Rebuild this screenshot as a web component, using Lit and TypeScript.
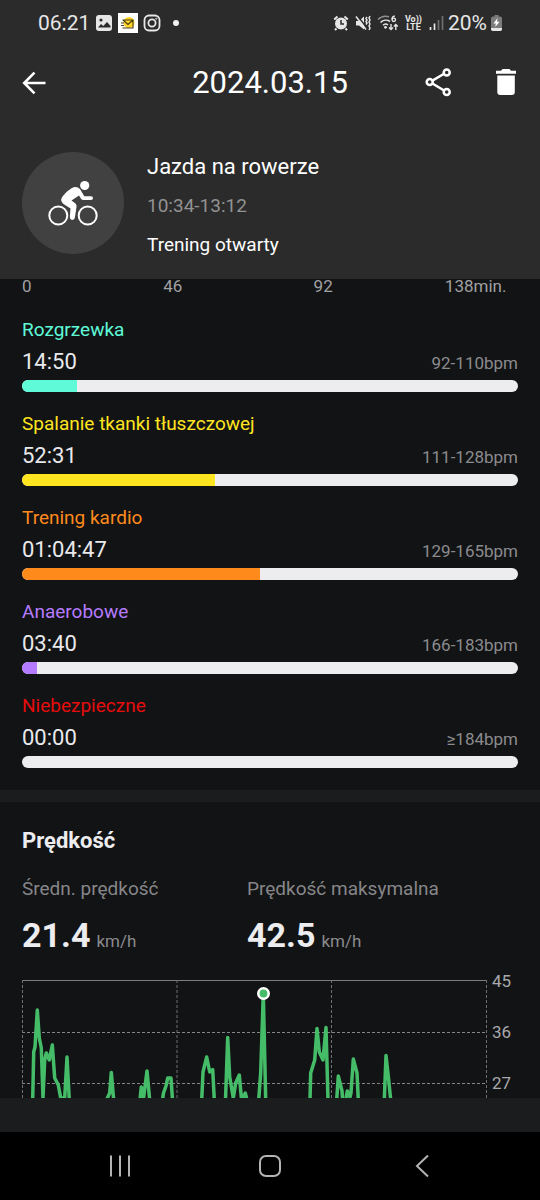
import { LitElement, html, svg, css } from "lit";
import { customElement, property } from "lit/decorators.js";

interface Zone {
  name: string;
  time: string;
  range: string;
  color: string;
  percent: number;
}

const ZONES: Zone[] = [
  { name: "Rozgrzewka", time: "14:50", range: "92-110bpm", color: "#5ffbd9", percent: 11 },
  { name: "Spalanie tkanki tłuszczowej", time: "52:31", range: "111-128bpm", color: "#ffe51f", percent: 39 },
  { name: "Trening kardio", time: "01:04:47", range: "129-165bpm", color: "#ff8a1c", percent: 48 },
  { name: "Anaerobowe", time: "03:40", range: "166-183bpm", color: "#b57bff", percent: 3 },
  { name: "Niebezpieczne", time: "00:00", range: "≥184bpm", color: "#e60c0c", percent: 0 },
];

// Speed peaks, one polyline per burst, in chart units.
const PEAKS: string[] = [
  "10.7,120 11.7,72 13,67 15.3,30 17.3,58 19.3,68 21,118 22.7,80 24.3,73 27.3,80 30.3,65 32.7,98 36.3,105 38.7,118 42.7,118 45,77 47.3,120",
  "84.5,120 87.7,113 89.3,92.5 91.7,120",
  "118,120 119.3,107 121.7,117 125,91 127.7,120",
  "140.5,120 141.5,113 144,106 145.7,98 149,98 150.5,120",
  "179.7,120 181,92 184.7,77 187.7,92 190.7,89.5 192.3,120",
  "203.5,120 205.7,57.5 207.7,97 211.3,118 213.7,103 217.3,95 219.3,117 221,118 223.3,113 225,120",
  "236.7,120 238.7,93 241.3,13.5 243.7,120",
  "288,120 288.7,93 292.7,80 295,48.5 297.3,72 301,80 304,47.5 306,120",
  "314.7,120 316.3,96 320,111 320.7,120",
  "323.7,120 325.3,111 328,117 329,113 331.3,79 335,93 336.3,120",
  "362.3,120 364,75.5 366.7,100 368.7,120",
];

@customElement("status-bar")
class StatusBar extends LitElement {
  static styles = css`
    :host { display: block; color: #e6e6e6; }
    .bar { display: flex; justify-content: space-between; align-items: center; height: 46px; padding: 0 38px; }
    .group { display: flex; align-items: center; gap: 5px; }
    .right { gap: 4px; }
    .text { font-size: 21px; line-height: 24px; }
    svg { display: block; flex: none; }
    .volte { display: grid; font-size: 9px; line-height: 8px; font-weight: 700; text-align: center; margin: 0 2px; }
  `;

  render() {
    return html`
      <div class="bar">
        <div class="group">
          <span class="text">06:21</span>
          <svg width="18" height="18" viewBox="0 0 18 18">
            <rect x="1" y="1" width="16" height="16" rx="3" fill="#e6e6e6" />
            <circle cx="6" cy="6" r="1.6" fill="#2b2b2b" />
            <path d="M3 13.5 6 10l2.3 2L12 8l3.5 4v1.500z" fill="#2b2b2b" />
          </svg>
          <svg width="20" height="20" viewBox="0 0 20 20">
            <rect width="20" height="20" fill="#fff" />
            <circle cx="11" cy="9.500" r="5.500" fill="#ffd426" />
            <path d="M4.500 7h10.500v8H4.500M5 7l5 4.500L15 7M3 10h3M3 12.500h3" fill="none" stroke="#4a4018" stroke-width="1.100" />
          </svg>
          <svg width="18" height="18" viewBox="0 0 18 18" fill="none" stroke="#e6e6e6" stroke-width="1.800">
            <rect x="1.500" y="1.500" width="15" height="15" rx="4.500" />
            <circle cx="9" cy="9" r="3.600" />
            <circle cx="13.300" cy="4.700" r="0.600" stroke-width="1" />
          </svg>
          <svg width="22" height="18" viewBox="0 0 22 18"><circle cx="10" cy="9" r="3" fill="#f0f0f0" /></svg>
        </div>
        <div class="group right">
          <svg width="16" height="18" viewBox="0 0 16 18" fill="none" stroke="#e6e6e6">
            <circle cx="8" cy="9.500" r="6" fill="#e6e6e6" stroke="none" />
            <path d="M8 6v4h3" stroke="#2b2b2b" stroke-width="1.500" />
            <path d="M1.200 5.500 4.500 2.500M14.800 5.500 11.500 2.500M3.500 14.500 2 16.200M12.500 14.500 14 16.200" stroke-width="2" />
          </svg>
          <svg width="20" height="18" viewBox="0 0 20 18" fill="none" stroke="#e6e6e6">
            <path d="M3 7h3l5-4.500v13L6 11.500H3z" fill="#e6e6e6" stroke="none" />
            <path d="M4.500 2 12 11.500" stroke="#2b2b2b" stroke-width="1.500" />
            <path d="M3 2.500 13 15.500" stroke-width="1.500" />
            <path d="M14 3l-1 1.500 1 1.500-1 1.500 1 1.500-1 1.500M17 2l-1 2 1 2-1 2 1 2-1 2 1 2-1 2" stroke-width="1.500" />
          </svg>
          <svg width="22" height="18" viewBox="0 0 22 18" fill="none" stroke="#e6e6e6" stroke-width="1.600">
            <path d="M1 5.500C4 2.500 8 1.600 12 2.800" stroke="#8f8f8f" />
            <path d="M3.500 8.500C6 6 10 5.500 13 7.500M6 11.300c1.500-1.500 3.500-1.500 5-.3" />
            <circle cx="8.500" cy="13.300" r="1.400" fill="#e6e6e6" stroke="none" />
            <path d="M17.800 2c-1.800.2-2.800 1.600-2.800 3.500" stroke-width="1.400" />
            <circle cx="16.800" cy="5.800" r="1.700" stroke-width="1.400" />
            <path d="M14 10v5.500M12 13.500l2 2 2-2M18.800 16v-5.500M16.800 12.500l2-2 2 2" stroke-width="1.400" />
          </svg>
          <span class="volte"><span>Vo))</span><span>LTE</span></span>
          <svg width="16" height="18" viewBox="0 0 16 18" stroke-width="1.700">
            <path d="M2.500 13v3M6.500 9.500V16" stroke="#e6e6e6" />
            <path d="M10.500 6v10M14.500 2v14" stroke="#707070" />
          </svg>
          <span class="group right">
            <span class="text">20%</span>
            <svg width="11" height="18" viewBox="0 0 11 18">
              <path d="M3.500 1h4v1.500H9q2 0 2 2V15q0 2-2 2H2q-2 0-2-2V4.500q0-2 2-2h1.500z" fill="#7c7c7c" />
              <path d="M0 14h11v1q0 2-2 2H2q-2 0-2-2z" fill="#e6e6e6" />
              <path d="M6.500 4 2.500 9.500h2.300L4.300 13l4.200-5.300H6z" fill="#fff" />
            </svg>
          </span>
        </div>
      </div>
    `;
  }
}

@customElement("zone-row")
class ZoneRow extends LitElement {
  static styles = css`
    :host { display: block; }
    .name { font-size: 19px; line-height: 24px; margin-bottom: 6px; }
    .row { display: flex; justify-content: space-between; align-items: baseline; height: 28px; line-height: 28px; margin-bottom: 4px; }
    .time { font-size: 22px; color: #e9e9ec; }
    .range { font-size: 17px; color: #8b8b8d; }
    .track { height: 12px; border-radius: 6px; background: #ededef; overflow: hidden; }
    .fill { height: 100%; }
  `;

  @property({ attribute: false }) zone!: Zone;

  render() {
    const z = this.zone;
    return html`
      <div class="name" style="color:${z.color}">${z.name}</div>
      <div class="row"><span class="time">${z.time}</span><span class="range">${z.range}</span></div>
      <div class="track"><div class="fill" style="width:${z.percent}%;background:${z.color}"></div></div>
    `;
  }
}

@customElement("speed-chart")
class SpeedChart extends LitElement {
  static styles = css`
    :host { display: flex; gap: 5px; align-items: flex-start; }
    .plot { flex: 1; min-width: 0; display: block; margin-top: 9px; }
    .scale { display: grid; gap: 31px; width: 26px; font-size: 17px; line-height: 20px; color: #a9a9ab; }
  `;

  render() {
    return html`
      <svg class="plot" viewBox="0 0 465 118" role="img" aria-label="Prędkość">
        <path d="M0 .5H465" stroke="#7d7d7f" />
        <path d="M0 52.500H465M0 103.500H465" stroke="#858587" stroke-dasharray="3 2" />
        <path d="M.5 0V118M155 0V118M309.500 0V118M464.500 0V118" stroke="#707072" stroke-dasharray="3 2" />
        <g fill="none" stroke="#45bd68" stroke-width="3.500" stroke-linejoin="round">
          ${PEAKS.map((p) => svg`<polyline points=${p} />`)}
        </g>
        <circle cx="241.500" cy="13.500" r="5.200" fill="#45bd68" stroke="#fff" stroke-width="2.600" />
      </svg>
      <div class="scale"><span>45</span><span>36</span><span>27</span></div>
    `;
  }
}

@customElement("app-root")
class AppRoot extends LitElement {
  static styles = css`
    :host {
      display: flex; flex-direction: column; min-height: 100vh;
      background: #121315; color: #fff;
      font-family: Roboto, "Noto Sans", sans-serif;
    }
    h1, h2, p, dl, dd, dt { margin: 0; font-weight: 400; }
    button { border: 0; padding: 0; background: none; color: inherit; display: grid; place-items: center; cursor: pointer; }
    svg { display: block; }
    .top { background: #2b2b2b; }
    .titlebar { display: grid; grid-template-columns: 1fr auto 1fr; align-items: center; height: 74px; padding: 0 20px; }
    .titlebar h1 { font-size: 31px; line-height: 40px; }
    .actions { display: flex; justify-content: flex-end; gap: 40px; }
    .back { justify-self: start; }
    .summary { display: flex; gap: 23px; align-items: flex-start; padding: 32px 22px 19px; }
    .avatar { width: 102px; height: 102px; border-radius: 50%; background: #414141; display: grid; place-items: center; flex: none; }
    .details { display: grid; gap: 9px; line-height: 30px; font-size: 19px; }
    .activity { font-size: 22px; }
    .hours { color: #929292; }
    .content { flex: 1; }
    .axis { display: grid; grid-template-columns: 141fr 150fr 131fr 73fr; padding: 0 22px; font-size: 17px; line-height: 14px; color: #a0a0a2; }
    .zones { display: grid; gap: 20px; padding: 25px 22px 22px; }
    .divider { height: 12px; background: #1b1c1e; }
    .speed { padding: 25px 22px 0; }
    .speed h2 { font-size: 22px; line-height: 28px; font-weight: 700; color: #ededf0; }
    .stats { display: grid; grid-template-columns: 225fr 271fr; margin: 20px 0 10px; }
    dt { font-size: 19px; line-height: 28px; color: #868688; }
    dd { font-size: 17px; line-height: 40px; color: #8b8b8d; margin-top: 12px; }
    .value { font-size: 34px; font-weight: 700; color: #ededf0; margin-right: 6px; }
    .strip { height: 34px; background: #1b1c1e; }
    .nav { display: grid; grid-template-columns: repeat(3, 1fr); height: 68px; padding: 0 45px; background: #000; color: #b4b4b4; }
  `;

  render() {
    return html`
      <header class="top">
        <status-bar></status-bar>
        <div class="titlebar">
          <button class="back" aria-label="Wstecz">
            <svg width="28" height="28" viewBox="0 0 28 28" fill="none" stroke="#fff" stroke-width="2.600">
              <path d="M25.500 14H4.500M14.500 3.700 4.200 14l10.300 10.300" />
            </svg>
          </button>
          <h1>2024.03.15</h1>
          <div class="actions">
            <button aria-label="Udostępnij">
              <svg width="28" height="30" viewBox="0 0 28 30" fill="none" stroke="#fff" stroke-width="2.500">
                <path d="M8 12.800 20.500 5.500M8 15.200 20.500 22.800" />
                <circle cx="5.700" cy="14" r="3" /><circle cx="22.700" cy="4.500" r="3" /><circle cx="22.700" cy="24" r="3" />
              </svg>
            </button>
            <button aria-label="Usuń">
              <svg width="28" height="30" viewBox="0 0 28 30" fill="#fff">
                <path d="M4 2.700h5L10.500 1h7L19 2.700h5v3H4zM5.300 7.500h17.500V24q0 3-3 3H8.300q-3 0-3-3z" />
              </svg>
            </button>
          </div>
        </div>
        <div class="summary">
          <div class="avatar">
            <svg width="50" height="46" viewBox="0 0 50 46">
              <g fill="none" stroke="#fff" stroke-width="2">
                <circle cx="10.300" cy="35.500" r="9" /><circle cx="39.700" cy="35.500" r="9" />
              </g>
              <circle cx="36.700" cy="5.500" r="4.600" fill="#fff" />
              <path d="M14.500 16.500Q18 11.500 23.500 8.200Q28.500 5.500 32 9L36.300 16.300H43Q45 16.500 45 18.200Q45 19.900 43 20H35.500Q33.800 20 33 18.700L31 15.500L23.500 20.500L27.500 23.500Q29 25 28.500 27L26.800 38Q26.200 40 24 40Q21.700 39.500 21.800 37L22.500 28.500L15.500 24Q11.500 20.800 14.500 16.500Z" fill="#fff" />
            </svg>
          </div>
          <div class="details">
            <p class="activity">Jazda na rowerze</p>
            <p class="hours">10:34-13:12</p>
            <p>Trening otwarty</p>
          </div>
        </div>
      </header>
      <main class="content">
        <div class="axis"><span>0</span><span>46</span><span>92</span><span>138min.</span></div>
        <section class="zones">${ZONES.map((z) => html`<zone-row .zone=${z}></zone-row>`)}</section>
        <div class="divider"></div>
        <section class="speed">
          <h2>Prędkość</h2>
          <dl class="stats">
            <div><dt>Średn. prędkość</dt><dd><span class="value">21.4</span>km/h</dd></div>
            <div><dt>Prędkość maksymalna</dt><dd><span class="value">42.5</span>km/h</dd></div>
          </dl>
          <speed-chart></speed-chart>
        </section>
      </main>
      <div class="strip"></div>
      <nav class="nav">
        <button aria-label="Ostatnie">
          <svg width="24" height="24" viewBox="0 0 24 24" stroke="currentColor" stroke-width="2"><path d="M3 1.500v21M12 1.500v21M21 1.500v21" /></svg>
        </button>
        <button aria-label="Ekran główny">
          <svg width="24" height="24" viewBox="0 0 24 24" fill="none" stroke="currentColor" stroke-width="2"><rect x="2" y="2" width="20" height="20" rx="6" /></svg>
        </button>
        <button aria-label="Wróć">
          <svg width="24" height="24" viewBox="0 0 24 24" fill="none" stroke="currentColor" stroke-width="2"><path d="M20 1.500 9 12l11 10.500" /></svg>
        </button>
      </nav>
    `;
  }
}
